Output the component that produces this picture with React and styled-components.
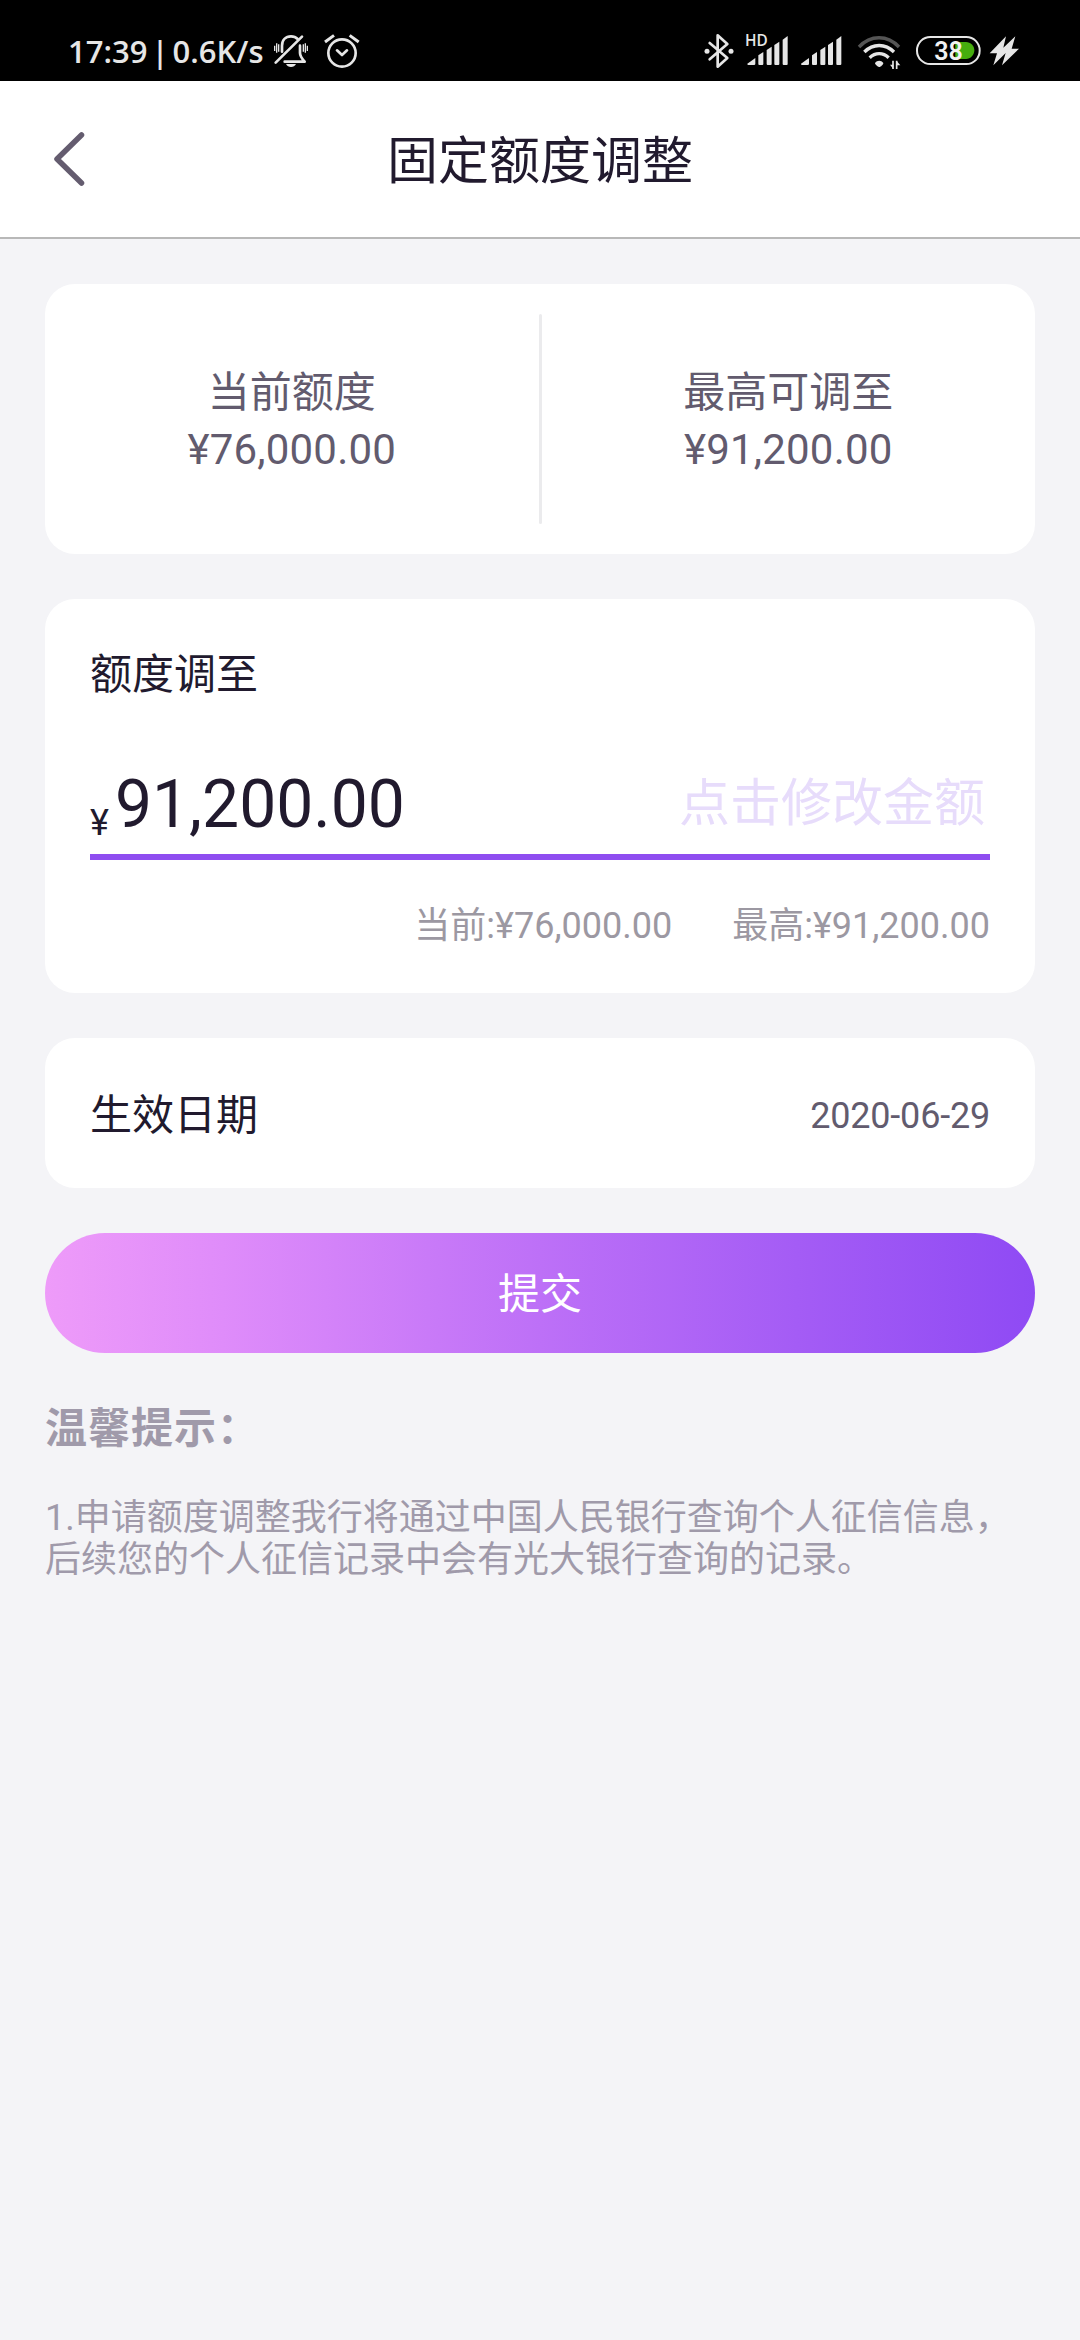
import React from "react";
import styled, { createGlobalStyle } from "styled-components";

const GlobalStyle = createGlobalStyle`
  * {
    box-sizing: border-box;
  }
  body {
    margin: 0;
    background: #f4f4f7;
    font-family: Roboto, "Noto Sans CJK SC", sans-serif;
  }
`;

const Page = styled.div`
  min-height: 2340px;
  display: flex;
  flex-direction: column;
  background: #f4f4f7;
`;

const StatusBar = styled.div`
  height: 81px;
  padding: 33px 61px 0 68px;
  display: flex;
  justify-content: space-between;
  background: #000;
`;

const StatusGroup = styled.div`
  display: flex;
`;

const StatusText = styled.span`
  width: 206px;
  color: #e6e6e6;
  font-family: "Open Sans", "Noto Sans", sans-serif;
  font-size: 31px;
  font-weight: 600;
  line-height: 36px;
  word-spacing: -4px;
  white-space: nowrap;
`;

const StyledIcon = styled.svg`
  display: block;
  height: 36px;
  flex: none;
  overflow: visible;
  margin-left: ${props => props.$gap || 0}px;
  fill: none;
  stroke: #e6e6e6;
  stroke-linecap: round;
  stroke-linejoin: round;
`;

// status icons are drawn on a grid of 3 units per pixel
const Icon = ({ x, width, gap, children }) => {
  return (
    <StyledIcon width={width} viewBox={`${x} 54 ${width * 3} 108`} $gap={gap}>
      {children}
    </StyledIcon>
  );
};

const BellOff = () => (
  <Icon x={672} width={34}>
    <path strokeWidth="8" d="M696 110V92c0-17 11-28 27-28 8 0 15 3 20 8" />
    <path strokeWidth="8" d="M750 92v22c0 9 4 15 14 26h-60" />
    <path strokeWidth="8" d="M756 65L677 143" />
    <path stroke="none" fill="#e6e6e6" d="M708 147h30c-3 6-8 9-15 9s-12-3-15-9z" />
    <path
      strokeWidth="4"
      strokeLinecap="butt"
      d="M674 92v16M680 85v28M686 88v22M760 88v22M766 85v28M772 92v16"
    />
  </Icon>
);

const Alarm = () => (
  <Icon x={822} width={35} gap={16}>
    <circle strokeWidth="8" cx="876" cy="114" r="41" />
    <path strokeWidth="8" d="M861 106l15 14 15-14" />
    <path strokeWidth="9" strokeLinecap="butt" d="M825 81l27-20M926 81l-27-20" />
  </Icon>
);

const Bluetooth = () => (
  <Icon x={42} width={29}>
    <path strokeWidth="8" d="M56 84l53 45-29 26V61l29 26-53 46" />
    <g stroke="none" fill="#e6e6e6">
      <circle cx="48" cy="109" r="7.5" />
      <circle cx="120" cy="109" r="7.5" />
    </g>
  </Icon>
);

const Bars = ({ x }) => (
  <g stroke="none" fill="#e6e6e6" transform={`translate(${x} 0)`}>
    <path d="M0 146l24-17v17q0 4-4 4H3q-3 0-3-4z" />
    <path d="M33 121l15-10v36q0 3-3 3h-9q-3 0-3-3z" />
    <path d="M58 105l15-10v52q0 3-3 3h-9q-3 0-3-3z" />
    <path d="M81 90l15-10v67q0 3-3 3h-9q-3 0-3-3z" />
    <path d="M106 74l15-11v84q0 3-3 3h-9q-3 0-3-3z" />
  </g>
);

const HdText = styled.text`
  font-family: "Open Sans", sans-serif;
  font-size: 46px;
  font-weight: 600;
  fill: #e6e6e6;
  stroke: none;
`;

const SignalHd = () => (
  <Icon x={166} width={42} gap={12}>
    <Bars x={170} />
    <HdText x="163" y="93">
      HD
    </HdText>
  </Icon>
);

const Signal = () => (
  <Icon x={332} width={41} gap={13}>
    <Bars x={332} />
  </Icon>
);

const Wifi = () => (
  <Icon x={501} width={42} gap={16}>
    <path strokeWidth="10" strokeLinecap="butt" stroke="#555" d="M504 96c34-37 86-37 120 0" />
    <path strokeWidth="10" strokeLinecap="butt" d="M520 111c26-26 63-26 89 0" />
    <path strokeWidth="10" strokeLinecap="butt" d="M536 128c17-16 40-16 57 0" />
    <path stroke="none" fill="#e6e6e6" d="M552 144c7-9 18-9 25 0 0 5-8 12-12 12s-13-7-13-12z" />
    <path strokeWidth="5" strokeLinecap="butt" d="M606 162v-25M617 137v25" />
    <path stroke="none" fill="#e6e6e6" d="M597 149h10v13zM617 138l11 13h-11z" />
  </Icon>
);

const BatteryText = styled.text`
  font-family: Roboto, sans-serif;
  font-size: 75px;
  font-weight: 600;
  fill: #f2f2f2;
  stroke: none;
`;

const Battery = () => (
  <Icon x={674} width={65} gap={16}>
    <path
      stroke="none"
      fill="#46ad0e"
      d="M792 81h32c14 0 25 11 25 25s-11 26-25 26h-32z"
    />
    <rect strokeWidth="6" x="677" y="66" width="188" height="81" rx="40" />
    <BatteryText x="729" y="134">
      38
    </BatteryText>
  </Icon>
);

const Bolt = () => (
  <Icon x={898} width={29} gap={9}>
    <path
      stroke="none"
      fill="#e6e6e6"
      d="M946 64L897 115h22L908 151L945 114L934 151L985 101h-22L974 64L938 98z"
    />
  </Icon>
);

const Header = styled.header`
  height: 158px;
  display: grid;
  grid-template-columns: 140px 1fr 140px;
  align-items: center;
  border-bottom: 2px solid #b8b8b8;
  background: #fff;
`;

const BackButton = styled.button`
  height: 60px;
  padding: 0 0 0 52px;
  border: none;
  background: none;
  svg {
    display: block;
  }
`;

const Title = styled.h1`
  margin: 0;
  padding-top: 6px;
  color: #211a2e;
  font-size: 51px;
  font-weight: 400;
  line-height: 60px;
  text-align: center;
`;

const Content = styled.main`
  padding: 45px 45px 0;
  display: flex;
  flex-direction: column;
  gap: 45px;
`;

const Card = styled.section`
  border-radius: 30px;
  background: #fff;
`;

const LimitCard = styled(Card)`
  height: 270px;
  display: grid;
  grid-template-columns: 1fr 3px 1fr;
  align-items: center;
`;

const Divider = styled.span`
  height: 210px;
  border-radius: 2px;
  background: #ebebed;
`;

const LimitItem = styled.div`
  padding-top: 4px;
  color: #625b6e;
  font-size: 42px;
  line-height: 57px;
  text-align: center;
`;

const LimitValue = styled.div`
  letter-spacing: 0.2px;
`;

const AmountCard = styled(Card)`
  padding: 46px 45px;
`;

const Label = styled.div`
  color: #211a2e;
  font-size: 42px;
  line-height: ${props => props.$lineHeight || "50px"};
`;

const AmountRow = styled.div`
  height: 156px;
  display: flex;
  align-items: flex-end;
  border-bottom: 6px solid #8f4df0;
`;

const Currency = styled.span`
  margin-bottom: 10px;
  color: #211a2e;
  font-size: 36px;
  line-height: 42px;
`;

const Amount = styled.span`
  margin: 0 auto 11px 6px;
  color: #211a2e;
  font-size: 66px;
  line-height: 77px;
`;

const EditHint = styled.span`
  margin: 0 5px 21px 0;
  color: #e7dcfb;
  font-size: 51px;
  line-height: 59px;
`;

const RangeRow = styled.div`
  margin-top: 45px;
  display: flex;
  justify-content: flex-end;
  gap: 60px;
  color: #9c98a2;
  font-size: 36px;
  line-height: 42px;
`;

const DateCard = styled(Card)`
  height: 150px;
  padding: 5px 45px 0;
  display: flex;
  align-items: center;
  justify-content: space-between;
`;

const DateValue = styled.span`
  color: #625b6e;
  font-size: 36px;
  line-height: 42px;
  letter-spacing: -0.2px;
`;

const SubmitButton = styled.button`
  height: 120px;
  padding: 4px 0 0;
  border: none;
  border-radius: 60px;
  color: #fff;
  font-family: inherit;
  font-size: 42px;
  line-height: 50px;
  background: linear-gradient(
    90deg,
    #ee9bf9 0%,
    #df8cfa 18%,
    #bd70f7 50%,
    #a45cf5 76%,
    #8f4af4 100%
  );
`;

const Tips = styled.footer`
  padding: 6px 0 0;
  color: #a09aaa;
`;

const TipsTitle = styled.h2`
  margin: 0;
  font-size: 42px;
  font-weight: 700;
  line-height: 49px;
  letter-spacing: 1px;
`;

const TipsText = styled.p`
  margin: 44px 0 0;
  font-size: 36px;
  line-height: 42px;
`;

const App = () => {
  return (
    <Page>
      <GlobalStyle />
      <StatusBar>
        <StatusGroup>
          <StatusText>17:39 | 0.6K/s</StatusText>
          <BellOff />
          <Alarm />
        </StatusGroup>
        <StatusGroup>
          <Bluetooth />
          <SignalHd />
          <Signal />
          <Wifi />
          <Battery />
          <Bolt />
        </StatusGroup>
      </StatusBar>
      <Header>
        <BackButton aria-label="返回">
          <svg width="34" height="60" viewBox="0 0 34 60" fill="none">
            <path
              d="M29.5 6L5 30l24.5 24"
              stroke="#645c6f"
              strokeWidth="5.5"
              strokeLinecap="round"
              strokeLinejoin="round"
            />
          </svg>
        </BackButton>
        <Title>固定额度调整</Title>
      </Header>
      <Content>
        <LimitCard>
          <LimitItem>
            当前额度
            <LimitValue>¥76,000.00</LimitValue>
          </LimitItem>
          <Divider />
          <LimitItem>
            最高可调至
            <LimitValue>¥91,200.00</LimitValue>
          </LimitItem>
        </LimitCard>
        <AmountCard>
          <Label $lineHeight="59px">额度调至</Label>
          <AmountRow>
            <Currency>¥</Currency>
            <Amount>91,200.00</Amount>
            <EditHint>点击修改金额</EditHint>
          </AmountRow>
          <RangeRow>
            <span>当前:¥76,000.00</span>
            <span>最高:¥91,200.00</span>
          </RangeRow>
        </AmountCard>
        <DateCard>
          <Label>生效日期</Label>
          <DateValue>2020-06-29</DateValue>
        </DateCard>
        <SubmitButton>提交</SubmitButton>
        <Tips>
          <TipsTitle>温馨提示：</TipsTitle>
          <TipsText>
            1.申请额度调整我行将通过中国人民银行查询个人征信信息，后续您的个人征信记录中会有光大银行查询的记录。
          </TipsText>
        </Tips>
      </Content>
    </Page>
  );
};

export default App;
